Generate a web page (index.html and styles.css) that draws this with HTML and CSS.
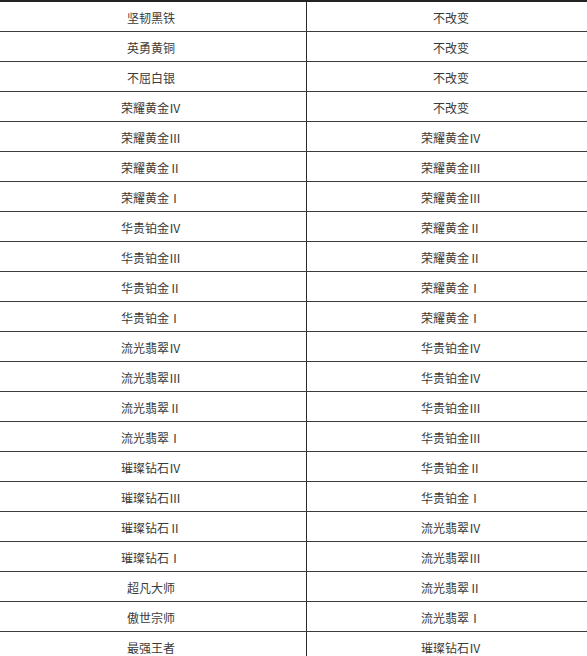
FILE: index.html
```html
<!DOCTYPE html>
<html lang="zh-CN">
<head>
<meta charset="utf-8">
<title>段位继承</title>
<link rel="stylesheet" href="styles.css">
</head>
<body>
<div class="rank-table">
  <div class="row"><div class="cell from">坚韧黑铁</div><div class="cell to">不改变</div></div>
  <div class="row"><div class="cell from">英勇黄铜</div><div class="cell to">不改变</div></div>
  <div class="row"><div class="cell from">不屈白银</div><div class="cell to">不改变</div></div>
  <div class="row"><div class="cell from">荣耀黄金Ⅳ</div><div class="cell to">不改变</div></div>
  <div class="row"><div class="cell from">荣耀黄金Ⅲ</div><div class="cell to">荣耀黄金Ⅳ</div></div>
  <div class="row"><div class="cell from">荣耀黄金Ⅱ</div><div class="cell to">荣耀黄金Ⅲ</div></div>
  <div class="row"><div class="cell from">荣耀黄金Ⅰ</div><div class="cell to">荣耀黄金Ⅲ</div></div>
  <div class="row"><div class="cell from">华贵铂金Ⅳ</div><div class="cell to">荣耀黄金Ⅱ</div></div>
  <div class="row"><div class="cell from">华贵铂金Ⅲ</div><div class="cell to">荣耀黄金Ⅱ</div></div>
  <div class="row"><div class="cell from">华贵铂金Ⅱ</div><div class="cell to">荣耀黄金Ⅰ</div></div>
  <div class="row"><div class="cell from">华贵铂金Ⅰ</div><div class="cell to">荣耀黄金Ⅰ</div></div>
  <div class="row"><div class="cell from">流光翡翠Ⅳ</div><div class="cell to">华贵铂金Ⅳ</div></div>
  <div class="row"><div class="cell from">流光翡翠Ⅲ</div><div class="cell to">华贵铂金Ⅳ</div></div>
  <div class="row"><div class="cell from">流光翡翠Ⅱ</div><div class="cell to">华贵铂金Ⅲ</div></div>
  <div class="row"><div class="cell from">流光翡翠Ⅰ</div><div class="cell to">华贵铂金Ⅲ</div></div>
  <div class="row"><div class="cell from">璀璨钻石Ⅳ</div><div class="cell to">华贵铂金Ⅱ</div></div>
  <div class="row"><div class="cell from">璀璨钻石Ⅲ</div><div class="cell to">华贵铂金Ⅰ</div></div>
  <div class="row"><div class="cell from">璀璨钻石Ⅱ</div><div class="cell to">流光翡翠Ⅳ</div></div>
  <div class="row"><div class="cell from">璀璨钻石Ⅰ</div><div class="cell to">流光翡翠Ⅲ</div></div>
  <div class="row"><div class="cell from">超凡大师</div><div class="cell to">流光翡翠Ⅱ</div></div>
  <div class="row"><div class="cell from">傲世宗师</div><div class="cell to">流光翡翠Ⅰ</div></div>
  <div class="row"><div class="cell from">最强王者</div><div class="cell to">璀璨钻石Ⅳ</div></div>
</div>
</body>
</html>
```

FILE: styles.css
```css
html, body {
  margin: 0;
  padding: 0;
  background: #ffffff;
  overflow: hidden;
}

.rank-table {
  width: 595px;
  border-top: 2px solid #222222;
  font-family: "Noto Sans CJK SC", "Noto Sans", sans-serif;
  font-size: 12px;
  color: #3a3a3a;
}

.row {
  display: grid;
  grid-template-columns: 307px 1fr;
  height: 29px;
  border-bottom: 1px solid #3c3c3c;
}

.cell {
  display: flex;
  align-items: center;
  justify-content: center;
  padding-top: 2px;
  line-height: 1;
}

.from {
  border-right: 1px solid #2a2a2a;
  padding-right: 4px;
}
```
